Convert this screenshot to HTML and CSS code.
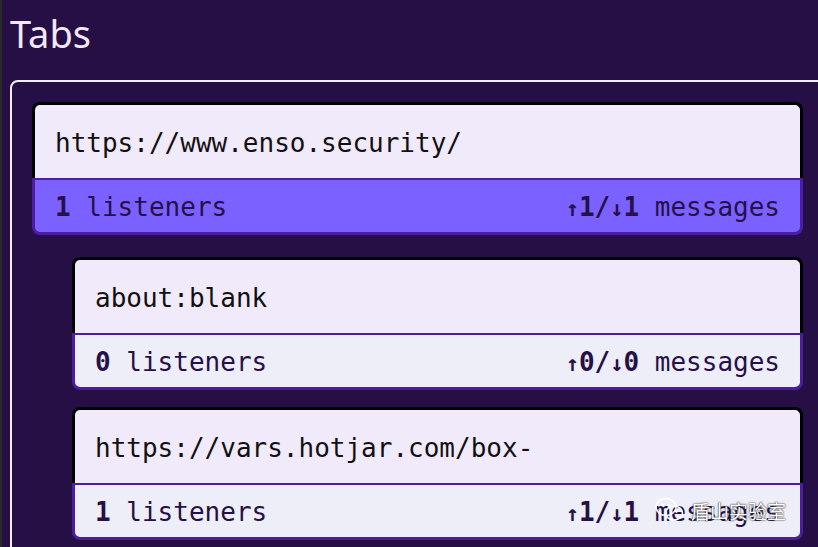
FILE: index.html
```html
<!DOCTYPE html>
<html>
<head>
<meta charset="utf-8">
<link rel="stylesheet" href="styles.css">
</head>
<body>
<div class="page">
  <h1 class="title">Tabs</h1>
  <div class="panel">
    <div class="tree">
      <div class="card">
        <div class="card-url">https://www.enso.security/</div>
        <div class="card-foot active">
          <span><b>1</b> listeners</span>
          <span><b><span class="arr">↑</span>1/<span class="arr">↓</span>1</b> messages</span>
        </div>
      </div>
      <div class="children">
        <div class="card">
          <div class="card-url">about:blank</div>
          <div class="card-foot">
            <span><b>0</b> listeners</span>
            <span><b><span class="arr">↑</span>0/<span class="arr">↓</span>0</b> messages</span>
          </div>
        </div>
        <div class="card">
          <div class="card-url">https://vars.hotjar.com/box-</div>
          <div class="card-foot">
            <span><b>1</b> listeners</span>
            <span><b><span class="arr">↑</span>1/<span class="arr">↓</span>1</b> messages</span>
          </div>
        </div>
      </div>
    </div>
  </div>
</div>
<div class="watermark">
  <svg class="wm-icon" width="30" height="28" viewBox="0 0 30 28">
    <ellipse cx="11" cy="11" rx="10" ry="8.5" fill="none" stroke="#ffffff" stroke-width="1.6"/>
    <ellipse cx="19" cy="17" rx="8.5" ry="7" fill="none" stroke="#ffffff" stroke-width="1.6"/>
    <circle cx="7.5" cy="9" r="1.3" fill="#fff"/>
    <circle cx="14" cy="9" r="1.3" fill="#fff"/>
    <circle cx="16.5" cy="16" r="1" fill="#fff"/>
    <circle cx="21.5" cy="16" r="1" fill="#fff"/>
  </svg>
  <span class="wm-text">盾山实验室</span>
</div>
</body>
</html>
```
FILE: styles.css
```css
html, body {
  margin: 0;
  padding: 0;
  height: 100%;
  overflow: hidden;
}
body {
  background: #250f45;
  border-left: 2px solid #2a2a2a;
  box-sizing: border-box;
  font-family: "DejaVu Sans Mono", monospace;
}
.page {
  padding-left: 8px;
}
.title {
  margin: 14px 0 28px 0;
  font-family: "Noto Sans", sans-serif;
  font-weight: 400;
  font-size: 38px;
  line-height: 38px;
  color: #f1e8fb;
}
.panel {
  width: 811px;
  border: 2px solid #f4eefc;
  border-radius: 8px 0 0 0;
  padding: 20px;
  height: 600px;
}
.card {
  display: flex;
  flex-direction: column;
  width: 771px;
}
.card-url {
  box-sizing: border-box;
  height: 76px;
  background: #f1eafb;
  border: 3px solid #000;
  border-bottom: none;
  border-radius: 8px 8px 0 0;
  padding: 23px 20px 0 20px;
  font-size: 26px;
  line-height: 30px;
  color: #111111;
}
.card-foot {
  box-sizing: border-box;
  height: 57px;
  display: flex;
  justify-content: space-between;
  background: #edeef8;
  border: 3px solid #4c1d9e;
  border-top-width: 2px;
  border-radius: 0 0 8px 8px;
  padding: 12px 20px 0 20px;
  font-size: 26px;
  line-height: 30px;
  color: #261047;
}
.card-foot.active {
  background: #7b61ff;
}
.card-foot b {
  font-weight: 700;
}
.arr {
  font-size: 22px;
  font-weight: 700;
  line-height: 0;
}
.children {
  margin: 22px 0 0 40px;
  display: flex;
  flex-direction: column;
  gap: 17px;
}
.children .card {
  width: 731px;
}
.watermark {
  position: absolute;
  left: 655px;
  top: 496px;
  display: flex;
  align-items: center;
  gap: 6px;
}
.wm-text {
  font-family: "Noto Sans CJK SC", sans-serif;
  font-size: 19px;
  color: #ffffff;
  text-shadow: 0 0 2px #333, 0 0 1px #333;
}
```
